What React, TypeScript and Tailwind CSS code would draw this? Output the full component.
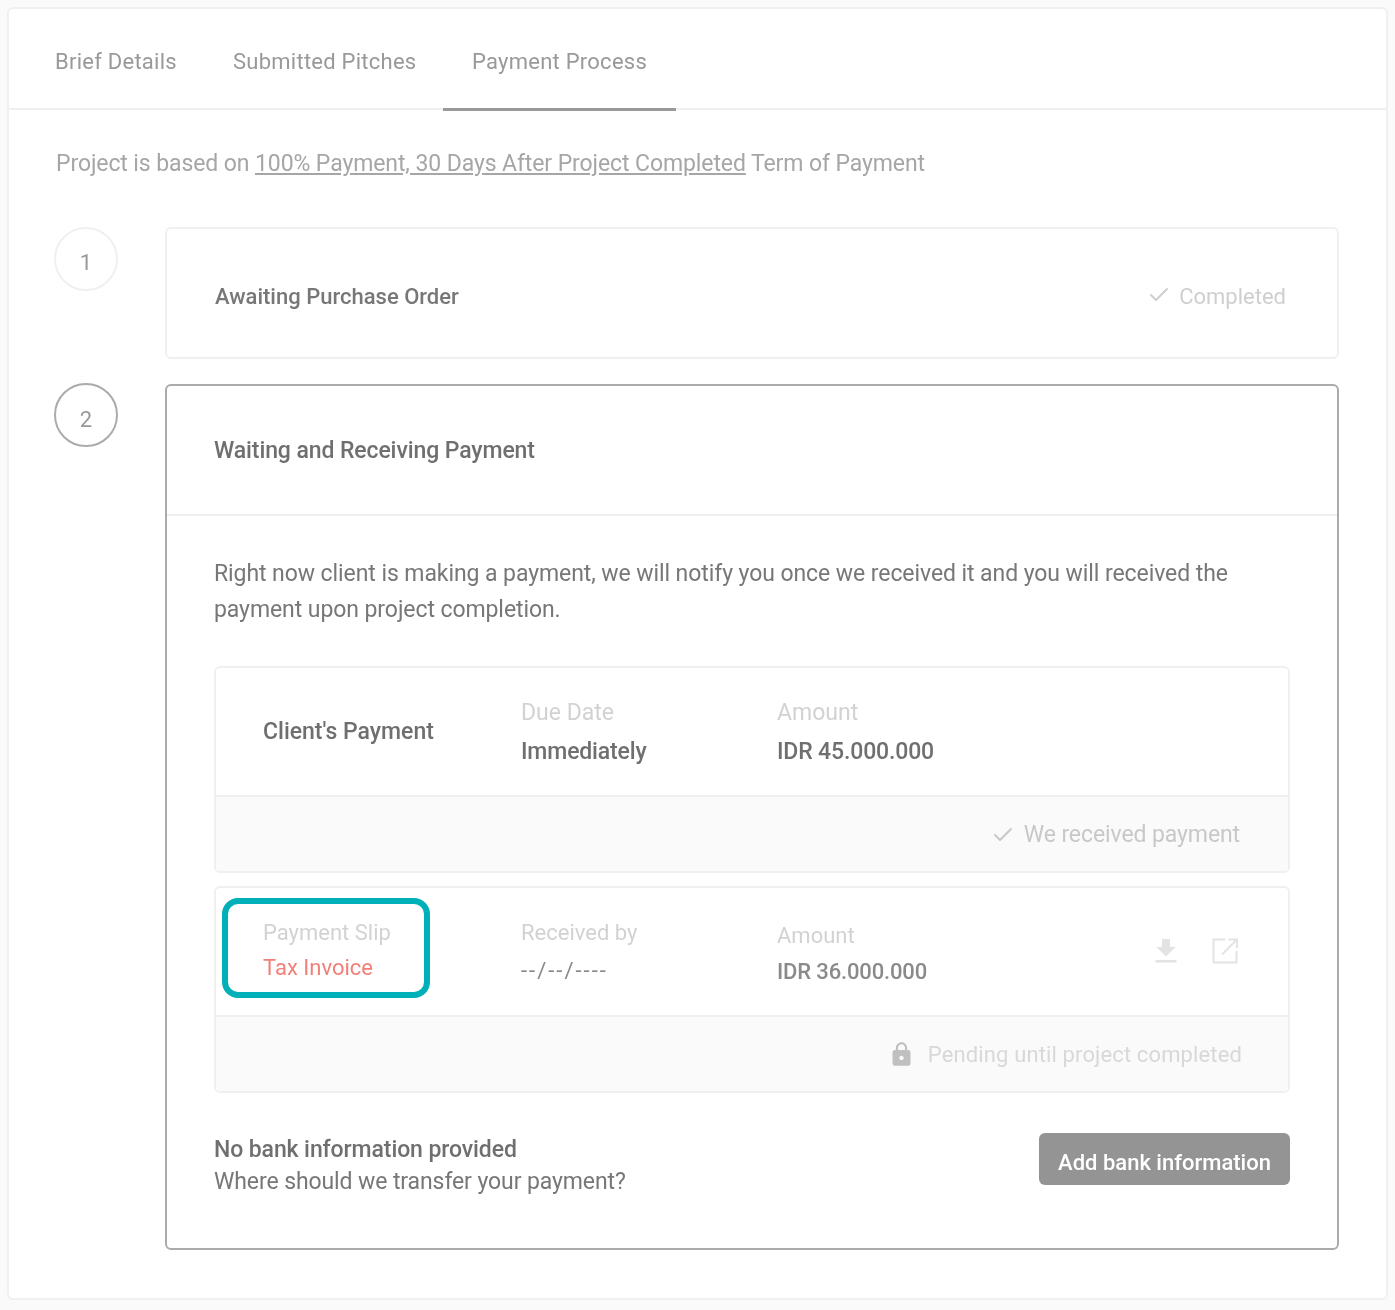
import { Check } from 'lucide-react';

function DownloadIcon() {
    return (
        <svg width="24" height="26" viewBox="0 0 24 26" fill="#e3e3e3">
            <path d="M8 1h8v8h5.500L12 18.500 2.500 9H8z" />
            <rect x="1.500" y="22" width="21" height="2.500" />
        </svg>
    );
}

function OpenIcon() {
    return (
        <svg width="26" height="26" viewBox="0 0 26 26" fill="none" stroke="#e3e3e3" strokeWidth="2">
            <path d="M13 1.500H1.500v23h23V13" />
            <path d="M10 16.500 24 2.500M16.500 1.500h8.500v8.500" />
        </svg>
    );
}

function LockIcon() {
    return (
        <svg width="27" height="27" viewBox="0 0 24 24" fill="#c0c0c0">
            <path d="M18 8h-1V6c0-2.760-2.240-5-5-5S7 3.240 7 6v2H6c-1.100 0-2 .9-2 2v10c0 1.100.9 2 2 2h12c1.100 0 2-.9 2-2V10c0-1.100-.9-2-2-2zm-6 9c-1.100 0-2-.9-2-2s.9-2 2-2 2 .9 2 2-.9 2-2 2zm3.100-9H8.900V6c0-1.710 1.390-3.100 3.100-3.100 1.710 0 3.100 1.390 3.100 3.100v2z" />
        </svg>
    );
}

export default function App() {
    return (
        <div className="h-[1310px] w-[1395px] bg-[#fafafa] p-[7px] font-['Roboto',sans-serif] text-[#6f6f6f]">
            <div className="h-[1293px] w-[1381px] rounded-md border-2 border-[#f0f0f0] bg-white blur-[0.6px]">
                {/* Tabs */}
                <div className="flex h-[101px] border-b-2 border-[#efefef] pl-[17px] text-[22px] tracking-[0.25px] text-[#999]">
                    <div className="flex h-full w-[179px] items-center pl-[29px] pt-[6px]">Brief Details</div>
                    <div className="flex h-full w-[238px] items-center pl-[28px] pt-[6px]">Submitted Pitches</div>
                    <div className="-mb-[2px] flex h-[102px] w-[233px] items-center justify-center border-b-[3px] border-[#999] pt-[6px]">Payment Process</div>
                </div>

                <p className="mt-[39px] pl-[47px] text-[23px] leading-[30px] tracking-[-0.1px] text-[#a6a6a6]">
                    Project is based on <span className="underline">100% Payment, 30 Days After Project Completed</span> Term of Payment
                </p>

                <div className="mt-[48px] flex flex-col gap-[25px] pl-[45px] pr-[47px]">
                    {/* Step 1 */}
                    <div className="flex gap-[47px]">
                        <div className="flex h-[64px] w-[64px] shrink-0 items-center justify-center rounded-full border-2 border-[#f0f0f0] pt-[6px] text-[22px] text-[#999]">1</div>
                        <div className="flex h-[132px] flex-1 items-center justify-between rounded-md border-2 border-[#f0f0f0] pl-[48px] pr-[51px] pt-[7px]">
                            <div className="text-[22px] font-medium text-[#777]">Awaiting Purchase Order</div>
                            <div className="flex items-center gap-[8px] text-[22px] text-[#cfcfcf]">
                                <Check size={24} strokeWidth={2} className="mb-1" />
                                Completed
                            </div>
                        </div>
                    </div>

                    {/* Step 2 */}
                    <div className="flex gap-[47px]">
                        <div className="-mt-[1px] flex h-[64px] w-[64px] shrink-0 items-center justify-center rounded-full border-2 border-[#ababab] pt-[8px] text-[22px] text-[#999]">2</div>
                        <div className="flex-1 rounded-md border-2 border-[#ababab]">
                            <div className="flex h-[130px] items-center border-b-2 border-[#efefef] pl-[47px] pt-[2px] text-[23px] font-medium tracking-[-0.1px] text-[#6f6f6f]">
                                Waiting and Receiving Payment
                            </div>
                            <div className="px-[47px] pt-[40px] pb-[50px]">
                                <p className="text-[23px] leading-[36px] tracking-[-0.08px] text-[#777]">
                                    Right now client is making a payment, we will notify you once we received it and you will received the payment upon project completion.
                                </p>

                                {/* Client's payment */}
                                <div className="mt-[38px] overflow-hidden rounded-md border-2 border-[#f0f0f0]">
                                    <div className="flex h-[127px] items-center">
                                        <div className="w-[305px] pl-[47px] pt-[2px] text-[23px] font-medium text-[#6f6f6f]">Client's Payment</div>
                                        <div className="w-[256px] pt-[6px]">
                                            <div className="text-[23px] leading-[26px] text-[#d2d2d2]">Due Date</div>
                                            <div className="mt-[9px] text-[23px] font-medium tracking-[-0.15px] text-[#6f6f6f]">Immediately</div>
                                        </div>
                                        <div className="pt-[6px]">
                                            <div className="text-[23px] leading-[26px] text-[#d2d2d2]">Amount</div>
                                            <div className="mt-[9px] text-[23px] font-medium tracking-[-0.15px] text-[#6f6f6f]">IDR 45.000.000</div>
                                        </div>
                                    </div>
                                    <div className="flex h-[76px] items-center justify-end gap-[9px] border-t-2 border-[#f0f0f0] bg-[#fafafa] pr-[48px] pt-[2px] text-[23px] tracking-[-0.1px] text-[#c8c8c8]">
                                        <Check size={24} strokeWidth={2} />
                                        We received payment
                                    </div>
                                </div>

                                {/* Payment slip */}
                                <div className="relative mt-[13px] rounded-md border-2 border-[#f0f0f0]">
                                    <div className="flex h-[127px] items-center">
                                        <div className="w-[305px] pb-[2px] pl-[47px]">
                                            <div className="text-[22px] leading-[26px] text-[#d2d2d2]">Payment Slip</div>
                                            <div className="mt-[9px] text-[22px] leading-[26px] text-[#f08078]">Tax Invoice</div>
                                        </div>
                                        <div className="w-[256px]">
                                            <div className="text-[22px] leading-[26px] text-[#d2d2d2]">Received by</div>
                                            <div className="mt-[12px] text-[22px] leading-[26px] tracking-[2px] text-[#888]">--/--/----</div>
                                        </div>
                                        <div className="flex-1 pt-[4px]">
                                            <div className="text-[22px] leading-[26px] text-[#d2d2d2]">Amount</div>
                                            <div className="mt-[10px] text-[22px] font-medium leading-[26px] tracking-[-0.15px] text-[#8a8a8a]">IDR 36.000.000</div>
                                        </div>
                                        <div className="flex items-center gap-[34px] pb-[2px] pr-[50px]">
                                            <DownloadIcon />
                                            <OpenIcon />
                                        </div>
                                    </div>
                                    <div className="flex h-[76px] items-center justify-end gap-[13px] rounded-b-md border-t-2 border-[#f0f0f0] bg-[#fafafa] pr-[46px] text-[22px] tracking-[0.13px] text-[#d8d8d8]">
                                        <LockIcon />
                                        Pending until project completed
                                    </div>
                                    {/* highlight */}
                                    <div className="absolute left-[6px] top-[10px] h-[100px] w-[208px] rounded-[16px] border-[6px] border-[#00b0b8]" />
                                </div>

                                {/* Bank info */}
                                <div className="mt-[40px] flex items-start justify-between">
                                    <div className="pt-[1px] text-[23px] leading-[32px] tracking-[-0.1px] text-[#6f6f6f]">
                                        <div className="font-medium">No bank information provided</div>
                                        <div className="text-[#777]">Where should we transfer your payment?</div>
                                    </div>
                                    <button className="h-[52px] w-[251px] rounded-md bg-[#949494] pt-[6px] text-[22px] font-medium text-white">Add bank information</button>
                                </div>
                            </div>
                        </div>
                    </div>
                </div>
            </div>
        </div>
    );
}
